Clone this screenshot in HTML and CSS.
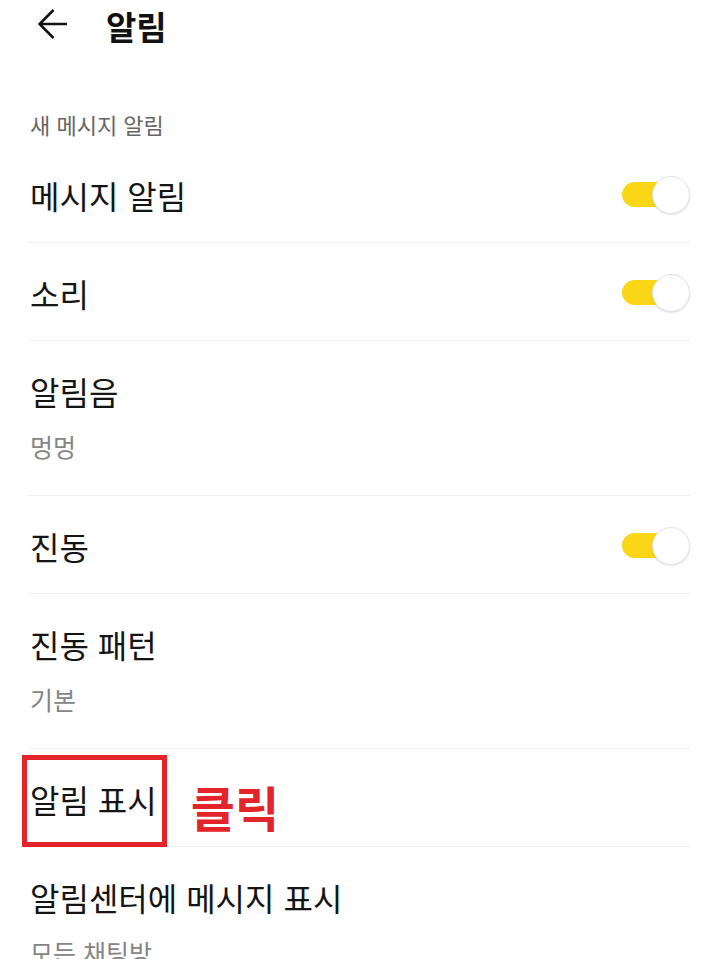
FILE: index.html
```html
<!DOCTYPE html>
<html lang="ko">
<head>
<meta charset="utf-8">
<title>알림</title>
<link rel="stylesheet" href="styles.css">
</head>
<body>
<header class="topbar">
  <svg class="back" width="30" height="30" viewBox="0 0 30 30" aria-hidden="true">
    <path d="M29 15H1.5M15.5 1L1.5 15L15.5 29" fill="none" stroke="#111" stroke-width="2.6" stroke-linecap="butt" stroke-linejoin="miter"/>
  </svg>
  <h1 class="title">알림</h1>
</header>

<div class="section-label">새 메시지 알림</div>

<ul class="list">
  <li class="row">
    <span class="row-title">메시지 알림</span>
    <span class="toggle"><span class="track"></span><span class="knob"></span></span>
  </li>
  <li class="row">
    <span class="row-title">소리</span>
    <span class="toggle"><span class="track"></span><span class="knob"></span></span>
  </li>
  <li class="row row-two">
    <span class="row-title">알림음</span>
    <span class="row-sub">멍멍</span>
  </li>
  <li class="row">
    <span class="row-title">진동</span>
    <span class="toggle"><span class="track"></span><span class="knob"></span></span>
  </li>
  <li class="row row-two">
    <span class="row-title">진동 패턴</span>
    <span class="row-sub">기본</span>
  </li>
  <li class="row row-marked">
    <span class="row-title">알림 표시</span>
    <span class="note">클릭</span>
    <span class="highlight"></span>
  </li>
  <li class="row row-two">
    <span class="row-title">알림센터에 메시지 표시</span>
    <span class="row-sub">모든 채팅방</span>
  </li>
</ul>
</body>
</html>
```

FILE: styles.css
```css
html, body {
  margin: 0;
  padding: 0;
  background: #ffffff;
}

body {
  font-family: "Noto Sans CJK KR", "Noto Sans", sans-serif;
  color: #141414;
  width: 720px;
  height: 959px;
  overflow: hidden;
}

.topbar {
  height: 52px;
  display: flex;
  align-items: center;
  padding-left: 38px;
}

.back {
  display: block;
  margin-top: -4px;
}

.title {
  margin: 0 0 0 38px;
  font-size: 33px;
  line-height: 40px;
  font-weight: 700;
  color: #111;
}

.section-label {
  padding: 58px 30px 7px;
  font-size: 22px;
  line-height: 28px;
  color: #666;
}

.list {
  list-style: none;
  margin: 0 30px 0 28px;
  padding: 0;
}

.row {
  position: relative;
  display: flex;
  align-items: center;
  height: 98px;
  box-sizing: border-box;
  padding: 32px 0 29px 2px;
  border-bottom: 1px solid #f0f0f0;
}

.row-two {
  height: 155px;
  flex-direction: column;
  align-items: flex-start;
  justify-content: flex-start;
  padding: 32px 0 0 2px;
}

.row-title {
  font-size: 32px;
  line-height: 36px;
  color: #141414;
  flex: 1;
}

.row-two .row-title {
  flex: none;
}

.row-sub {
  margin-top: 22px;
  font-size: 25px;
  line-height: 30px;
  color: #858585;
}

.toggle {
  position: relative;
  width: 68px;
  height: 40px;
  flex: none;
  margin-right: 0;
}

.track {
  position: absolute;
  left: 0;
  top: 7px;
  width: 50px;
  height: 25px;
  border-radius: 13px;
  background: #fbd616;
}

.knob {
  position: absolute;
  right: 0;
  top: 1px;
  width: 36px;
  height: 36px;
  border-radius: 50%;
  background: #ffffff;
  border: 1px solid #e2e2e2;
  box-shadow: 0 1px 2px rgba(0, 0, 0, 0.12);
}

.row-marked .row-title {
  flex: none;
}

.note {
  margin-left: 34px;
  margin-top: 14px;
  font-size: 48px;
  line-height: 36px;
  font-weight: 700;
  color: #e3242b;
}

.highlight {
  position: absolute;
  left: -6px;
  top: 6px;
  width: 145px;
  height: 92px;
  box-sizing: border-box;
  border: 5px solid #e3242b;
}
```
